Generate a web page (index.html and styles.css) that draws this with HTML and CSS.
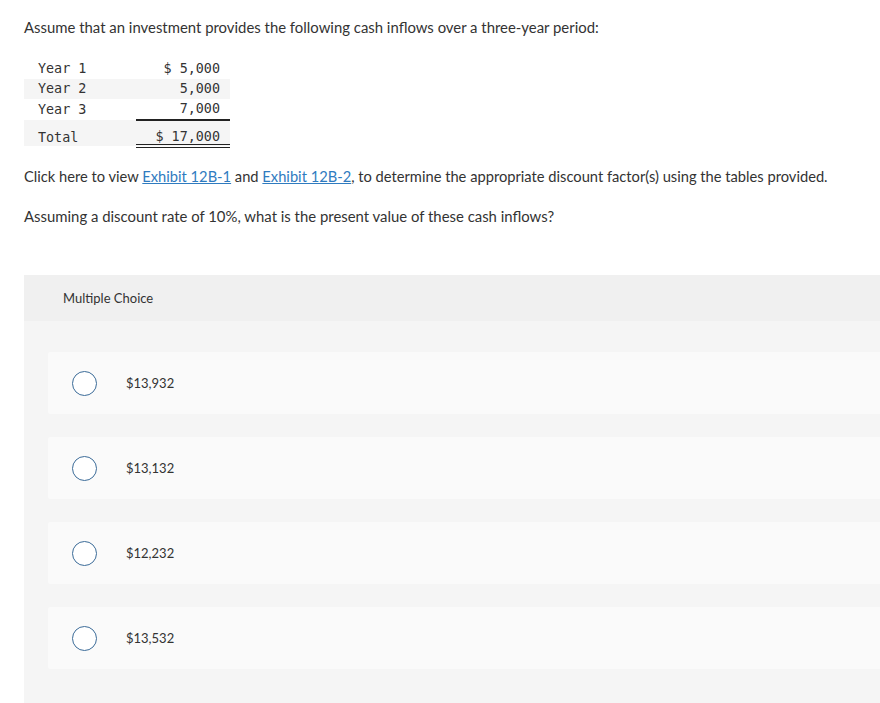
FILE: index.html
```html
<!DOCTYPE html>
<html>
<head>
<meta charset="utf-8">
<link rel="stylesheet" href="styles.css">
</head>
<body>
<div class="page">
  <p class="intro">Assume that an investment provides the following cash inflows over a three-year period:</p>
  <table class="cash">
    <tr><td class="lbl">Year 1</td><td class="val">$ 5,000</td></tr>
    <tr class="shade"><td class="lbl">Year 2</td><td class="val">5,000</td></tr>
    <tr><td class="lbl">Year 3</td><td class="val">7,000</td></tr>
    <tr class="shade total"><td class="lbl">Total</td><td class="val">$ 17,000</td></tr>
  </table>
  <p class="text click">Click here to view <a href="#">Exhibit 12B-1</a> and <a href="#">Exhibit 12B-2</a>, to determine the appropriate discount factor(s) using the tables provided.</p>
  <p class="text ask">Assuming a discount rate of 10%, what is the present value of these cash inflows?</p>

  <div class="mc">
    <div class="mc-head">Multiple Choice</div>
    <div class="mc-body">
      <div class="opt"><span class="radio"></span><span class="opt-text">$13,932</span></div>
      <div class="opt"><span class="radio"></span><span class="opt-text">$13,132</span></div>
      <div class="opt"><span class="radio"></span><span class="opt-text">$12,232</span></div>
      <div class="opt"><span class="radio"></span><span class="opt-text">$13,532</span></div>
    </div>
  </div>
</div>
</body>
</html>
```
FILE: styles.css
```css
html, body { margin: 0; padding: 0; background: #fff; }
body { font-family: "Lato", "Open Sans", sans-serif; color: #333; }
.page { padding: 17px 0 0 24px; }
p { margin: 0; }
.intro { font-size: 14.9px; line-height: 20px; }
.cash {
  margin-top: 22px;
  border-collapse: collapse;
  font-family: "DejaVu Sans Mono", monospace;
  font-size: 13.4px;
  color: #333;
}
.cash td { padding: 0; height: 20px; line-height: 20px; }
.cash .lbl { width: 98px; padding-left: 14px; }
.cash .val { width: 84px; padding-right: 10px; text-align: right; }
.cash .shade td { background: #f5f5f5; }
.cash tr:nth-child(3) .val { border-bottom: 2px solid #222; }
.cash .total td { height: 14px; line-height: 14px; padding-top: 9px; }
.cash .total .val { border-bottom: 4px double #222; }
.text { font-size: 14.7px; line-height: 20px; }
.ask { font-size: 14.9px; }
.click { margin-top: 18px; }
.ask { margin-top: 20px; }
a { color: #2f7bbf; text-decoration: underline; }
.mc { margin-top: 49px; }
.mc-head {
  background: #f0f0f0;
  height: 46px;
  line-height: 46px;
  padding-left: 39px;
  font-size: 13px;
  color: #333;
}
.mc-body {
  background: #f5f5f5;
  padding: 31px 0 40px 24px;
  display: flex;
  flex-direction: column;
  gap: 23px;
}
.opt {
  background: #fafafa;
  height: 62px;
  display: flex;
  align-items: center;
  border-radius: 2px 0 0 2px;
}
.radio {
  width: 23px;
  height: 23px;
  border: 1.5px solid #3b6b98;
  border-radius: 50%;
  background: #fff;
  margin-left: 24px;
  flex: none;
}
.opt-text { margin-left: 29px; font-size: 13px; color: #333; }
```
